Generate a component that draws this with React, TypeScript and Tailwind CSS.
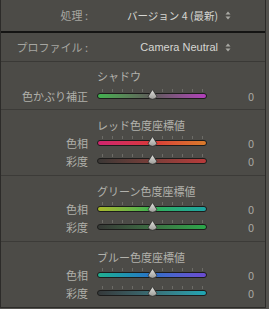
import React from "react";

type Track = { label: string; track: string };
type Section = { title: string; first?: boolean; rows: Track[] };

const SECTIONS: Section[] = [
  {
    title: "シャドウ",
    first: true,
    rows: [{ label: "色かぶり補正", track: "bg-linear-to-r from-[#3fb24f] via-[#5c5a58] to-[#b23dbb]" }],
  },
  {
    title: "レッド色度座標値",
    rows: [
      { label: "色相", track: "bg-linear-to-r from-[#d0246e] via-[#d83838] to-[#d87a2a]" },
      { label: "彩度", track: "bg-linear-to-r from-[#3a3735] to-[#b83a3a]" },
    ],
  },
  {
    title: "グリーン色度座標値",
    rows: [
      { label: "色相", track: "bg-linear-to-r from-[#a8b82a] via-[#34b050] to-[#1fa3a3]" },
      { label: "彩度", track: "bg-linear-to-r from-[#353835] to-[#2aa84a]" },
    ],
  },
  {
    title: "ブルー色度座標値",
    rows: [
      { label: "色相", track: "bg-linear-to-r from-[#22b08e] via-[#2a70c8] to-[#6a4ad0]" },
      { label: "彩度", track: "bg-linear-to-r from-[#35393a] to-[#1ea6b4]" },
    ],
  },
];

const TICKS = [0, 1, 2, 3, 4, 5, 6, 7, 8, 9, 10];

function UpDown() {
  return (
    <svg width="6" height="9" viewBox="0 0 6 9" className="ml-[7px]">
      <path d="M3 0.5 L5.5 3.5 H0.5 Z" fill="#a9a9a4" />
      <path d="M3 8.5 L5.5 5.5 H0.5 Z" fill="#a9a9a4" />
    </svg>
  );
}

function Thumb() {
  return (
    <svg width="11" height="12" viewBox="0 0 11 12" className="absolute left-[50px] top-[2px]">
      <defs>
        <linearGradient id="th" x1="0" y1="0" x2="0" y2="1">
          <stop offset="0" stopColor="#e2e2de" />
          <stop offset="1" stopColor="#9c9c98" />
        </linearGradient>
      </defs>
      <path d="M5.5 0.5 L9.8 7.3 A4.4 3.8 0 0 1 1.2 7.3 Z" fill="url(#th)" stroke="#2a2a28" strokeWidth="0.8" />
    </svg>
  );
}

function Slider({ track }: { track: string }) {
  return (
    <div className="relative w-[110px] h-[18px]">
      <div className="absolute left-[5px] right-[4px] top-[2px] h-[3px] flex justify-between">
        {TICKS.map((t) => (
          <div key={t} className="w-px h-[3px] bg-[#6c6b66]" />
        ))}
      </div>
      <div className={`absolute left-0 right-0 top-[6px] h-[6px] rounded-full border border-[#1c1c1b] ${track}`} />
      <Thumb />
    </div>
  );
}

export default function App() {
  return (
    <div
      className="w-[269px] h-[309px] bg-[#53524e] text-[11px]"
      style={{ fontFamily: '"Noto Sans CJK JP", "Liberation Sans", sans-serif' }}
    >
      <div className="w-[266px] bg-[#4c4b47] border-l border-r border-b border-[#2c2b29]">
        <div className="h-[33px] flex items-center border-b-2 border-[#141413]">
          <div className="w-[87px] text-right text-[#a6a6a1]">処理 :</div>
          <div className="flex-1 text-right text-[#d6d6d2] text-[10.5px]">バージョン 4 (最新)</div>
          <UpDown />
          <div className="w-[34px]" />
        </div>
        <div className="h-[29px] flex items-center border-b border-[#3a3936]">
          <div className="w-[87px] text-right text-[#a6a6a1]">プロファイル :</div>
          <div className="flex-1 text-right text-[#d6d6d2]" style={{ fontFamily: '"Liberation Sans", sans-serif' }}>
            Camera Neutral
          </div>
          <UpDown />
          <div className="w-[34px]" />
        </div>
        {SECTIONS.map((s) => (
          <div
            key={s.title}
            className={s.first ? "pt-[7px] pb-[4px]" : "pt-[8px] pb-[5px] border-t border-[#3c3b38]"}
          >
            <div className="h-[14px] leading-[14px] pl-[96px] text-[#b2b2ac]">{s.title}</div>
            <div className={s.first ? "mt-[4px]" : "mt-[2px]"}>
              {s.rows.map((r) => (
                <div key={r.label} className="h-[18px] flex items-center">
                  <div className="w-[87px] text-right text-[#b0b0aa] leading-[18px]">{r.label}</div>
                  <div className="ml-[9px]">
                    <Slider track={r.track} />
                  </div>
                  <div className="flex-1 text-right pr-[11px] text-[#a8a8a2] leading-[18px]">0</div>
                </div>
              ))}
            </div>
          </div>
        ))}
      </div>
    </div>
  );
}
